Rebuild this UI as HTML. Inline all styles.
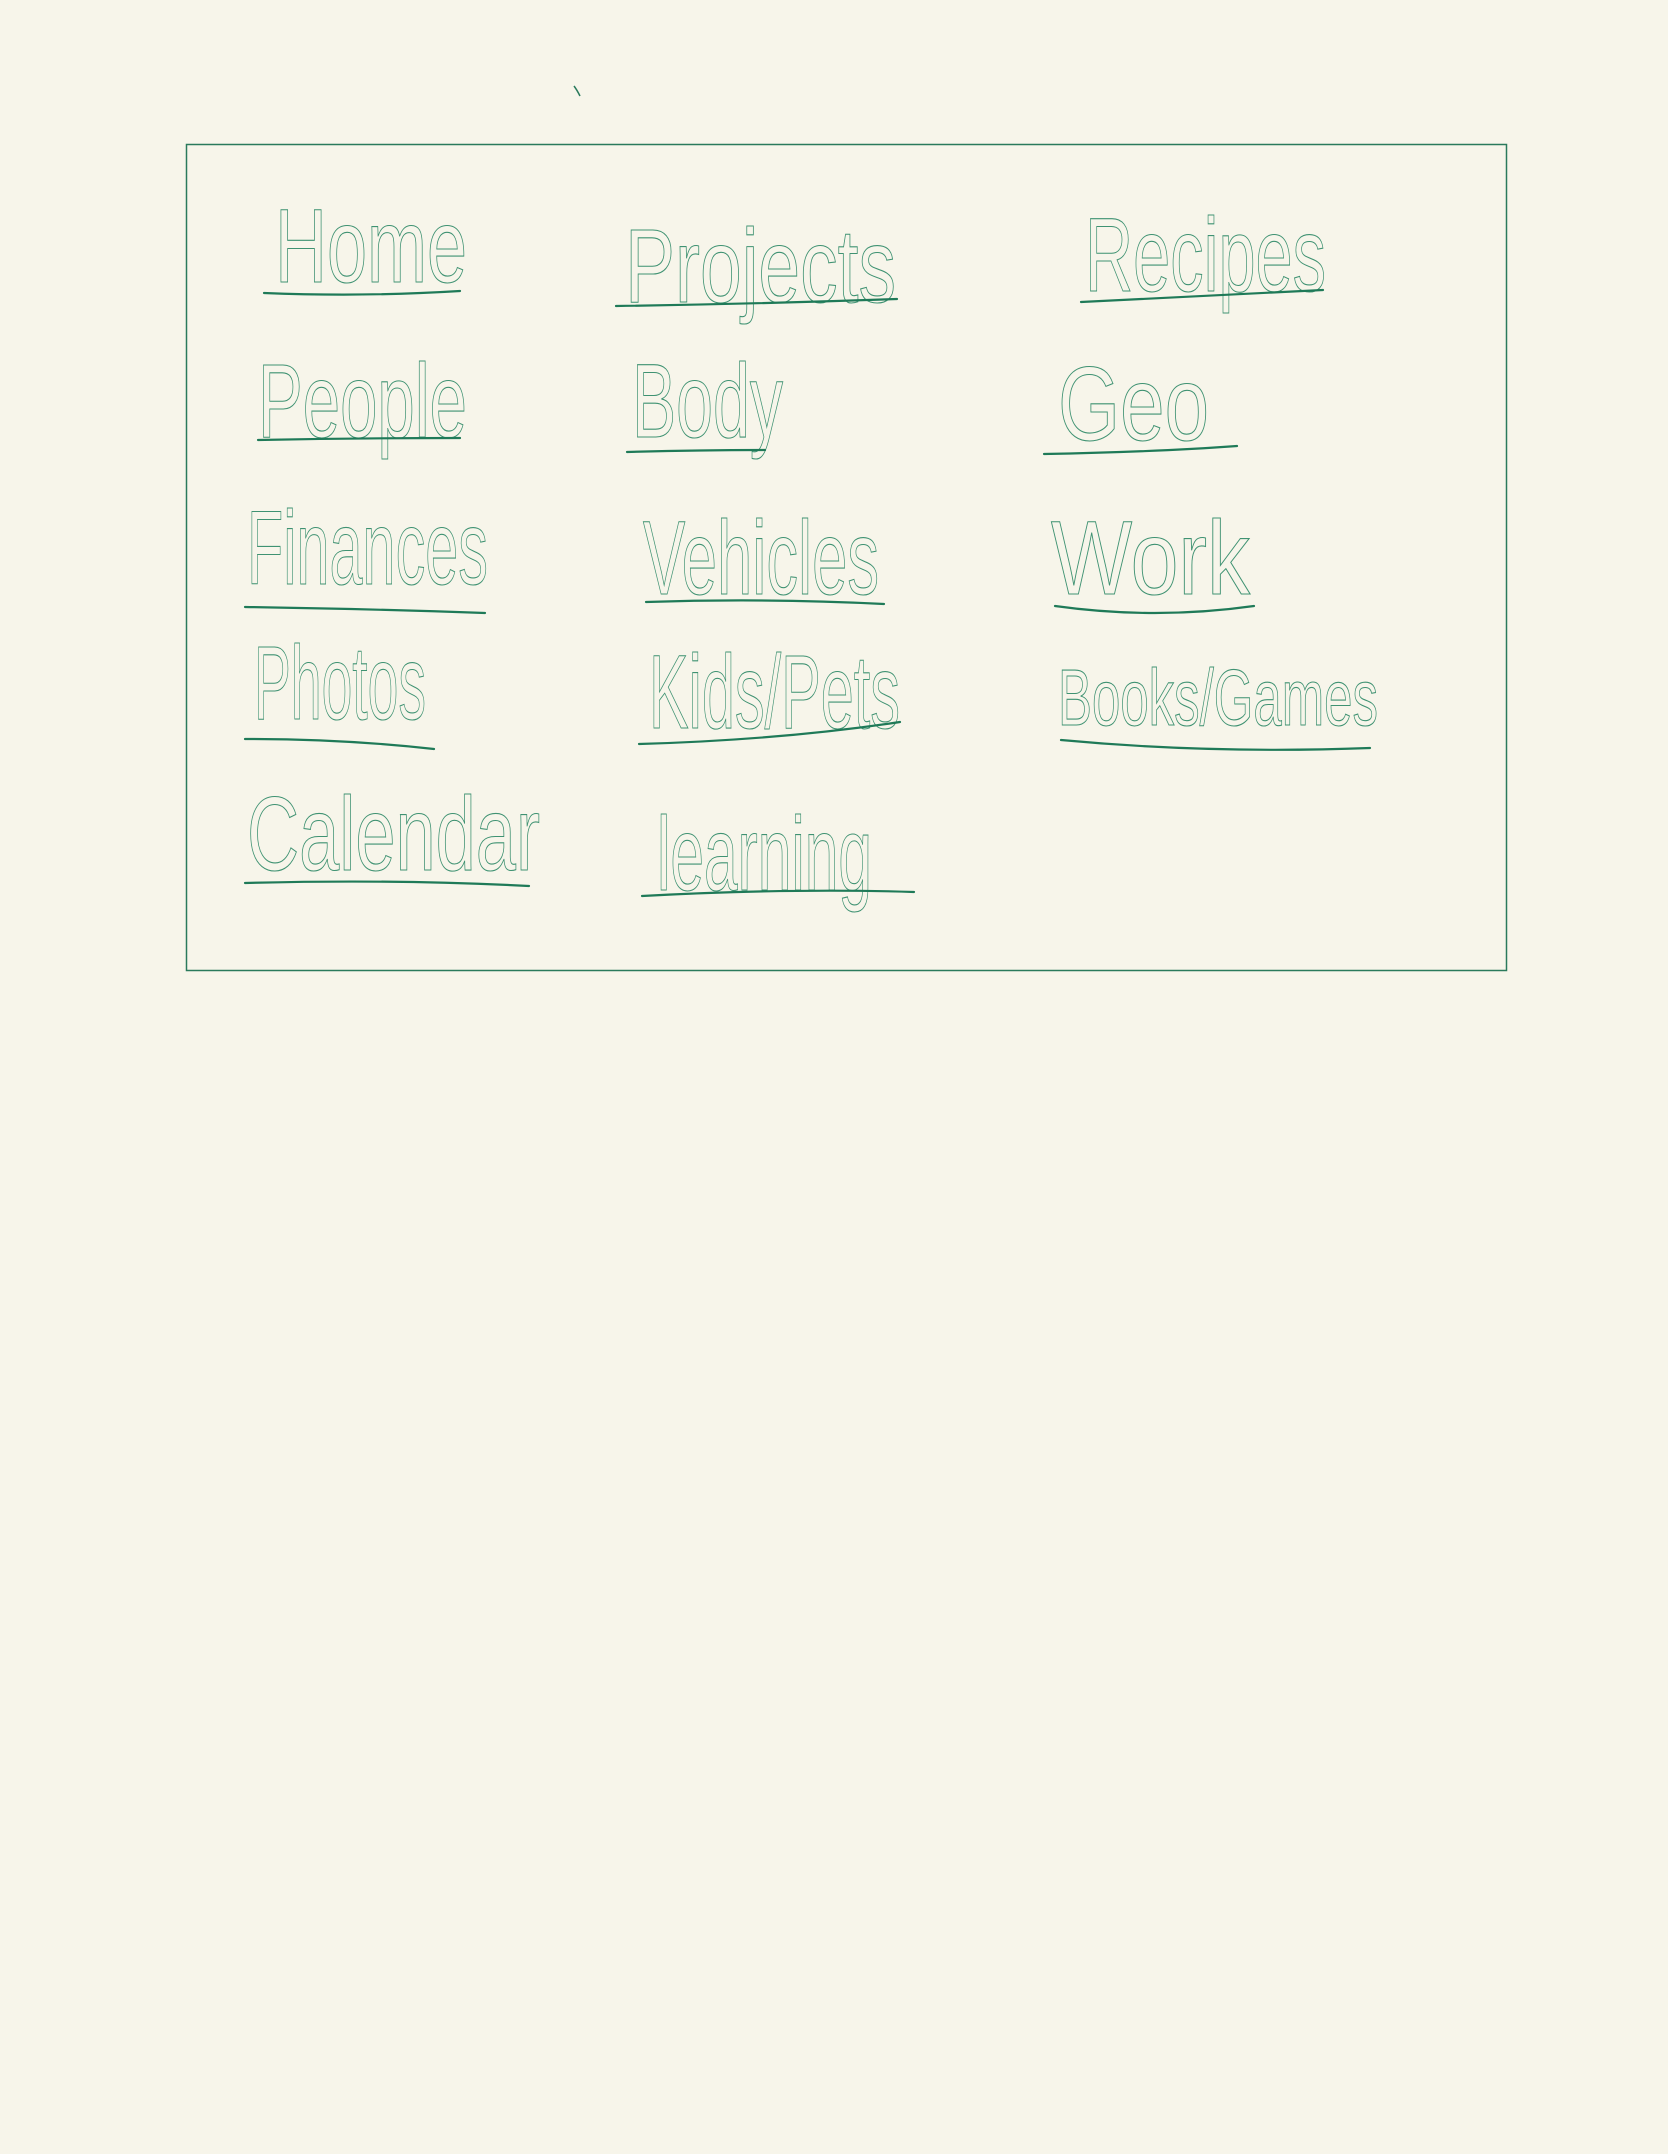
<!DOCTYPE html>
<html><head><meta charset="utf-8"><style>
html,body{margin:0;padding:0;background:#f7f5ea;}
svg{display:block}
text{font-family:"Liberation Sans",sans-serif;fill:none;stroke:#3f9272;stroke-width:1.1;}
</style></head><body>
<svg width="1668" height="2154" viewBox="0 0 1668 2154" xmlns="http://www.w3.org/2000/svg">
<rect x="0" y="0" width="1668" height="2154" fill="#f7f5ea"/>
<rect x="186.5" y="144.5" width="1320" height="826" fill="none" stroke="#2a7a5c" stroke-width="1.5"/>
<path d="M574 86 q3 4 6 10" stroke="#2a7a5c" fill="none" stroke-width="1.5"/>
<g font-size="105">
<text x="275" y="282" textLength="192" lengthAdjust="spacingAndGlyphs">Home</text>
<text x="625" y="302" textLength="271" lengthAdjust="spacingAndGlyphs">Projects</text>
<text x="1085" y="291" textLength="241" lengthAdjust="spacingAndGlyphs">Recipes</text>
<text x="258" y="437" textLength="209" lengthAdjust="spacingAndGlyphs">People</text>
<text x="632" y="437" textLength="151" lengthAdjust="spacingAndGlyphs">Body</text>
<text x="1058" y="440" textLength="151" lengthAdjust="spacingAndGlyphs">Geo</text>
<text x="247" y="584" textLength="241" lengthAdjust="spacingAndGlyphs">Finances</text>
<text x="643" y="594" textLength="236" lengthAdjust="spacingAndGlyphs">Vehicles</text>
<text x="1051" y="594" textLength="199" lengthAdjust="spacingAndGlyphs">Work</text>
<text x="254" y="719" textLength="172" lengthAdjust="spacingAndGlyphs">Photos</text>
<text x="649" y="728" textLength="251" lengthAdjust="spacingAndGlyphs">Kids/Pets</text>
<text x="247" y="870" textLength="293" lengthAdjust="spacingAndGlyphs">Calendar</text>
<text x="657" y="890" textLength="215" lengthAdjust="spacingAndGlyphs">learning</text>
</g>
<text x="1058" y="725" font-size="80" textLength="320" lengthAdjust="spacingAndGlyphs">Books/Games</text>
<g stroke="#1f7a58" stroke-width="2.2" fill="none" stroke-linecap="round">
<path d="M264 293 q100 4 196 -2"/>
<path d="M616 306 q140 -2 281 -7"/>
<path d="M1081 302 q120 -6 242 -12"/>
<path d="M258 440 q100 -2 202 -2"/>
<path d="M627 452 q70 -2 138 -2"/>
<path d="M1044 454 q110 -2 193 -8"/>
<path d="M245 607 q130 2 240 6"/>
<path d="M646 602 q120 -4 238 2"/>
<path d="M1055 606 q100 14 199 0"/>
<path d="M245 739 q100 0 189 10"/>
<path d="M639 744 q140 -4 261 -22"/>
<path d="M1061 740 q150 14 309 8"/>
<path d="M245 883 q150 -4 284 3"/>
<path d="M642 896 q150 -8 272 -4"/>
</g>
</svg>
</body></html>
